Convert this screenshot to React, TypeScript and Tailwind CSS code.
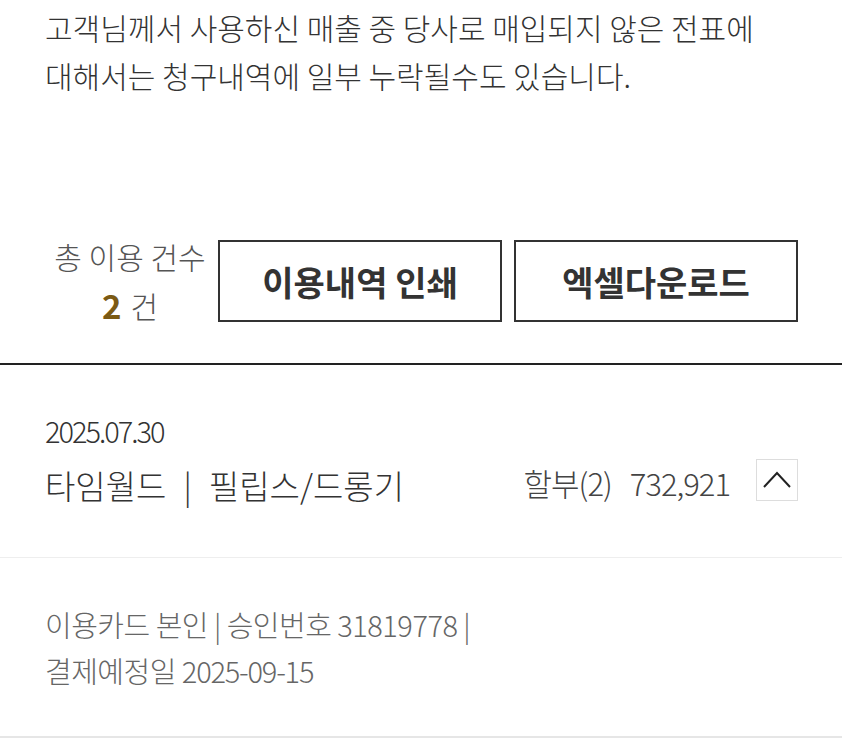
import React from "react";

const FONT = { fontFamily: '"Noto Sans CJK KR", "Noto Sans", sans-serif' };

export default function App() {
  return (
    <div className="w-[842px] bg-white" style={FONT}>
      <p className="px-[45px] pt-[3px] text-[30px] leading-[48px] font-light tracking-[0px] text-[#333]">
        고객님께서 사용하신 매출 중 당사로 매입되지 않은 전표에
        <br />
        대해서는 청구내역에 일부 누락될수도 있습니다.
      </p>

      <div className="mt-[141px] flex px-[44px]">
        <div className="flex w-[162px] flex-col items-center pl-[10px]">
          <div className="h-[32px] text-[30px] leading-[32px] font-light text-[#555]">총 이용 건수</div>
          <div className="mt-[17px] flex h-[32px] items-center gap-[9px] leading-[32px]">
            <span className="text-[33px] font-bold text-[#7b5a14]">2</span>
            <span className="text-[30px] font-light text-[#555]">건</span>
          </div>
        </div>
        <div className="ml-[12px] flex gap-[12px]">
          <button className="flex h-[82px] w-[284px] items-center justify-center border-2 border-[#333] text-[34px] font-bold text-[#333]">
            이용내역 인쇄
          </button>
          <button className="flex h-[82px] w-[284px] items-center justify-center border-2 border-[#333] text-[34px] font-bold text-[#333]">
            엑셀다운로드
          </button>
        </div>
      </div>

      <div className="mt-[41px] h-[2px] bg-[#222]" />

      <div className="pl-[45px] pr-[44px] pt-[49px]">
        <div className="text-[29px] leading-[32px] font-light tracking-[-2px] text-[#333]">2025.07.30</div>
        <div className="mt-[13px] flex h-[42px] items-center justify-between">
          <div className="flex items-center pt-[10px] text-[33px] leading-[42px] font-light text-[#333]">
            <span>타임월드</span>
            <span className="ml-[17px] mr-[17px]">|</span>
            <span>필립스/드롱기</span>
          </div>
          <div className="flex items-center">
            <span className="pt-[6px] text-[31px] leading-[42px] font-light tracking-[-1px] text-[#444]">할부(2)</span>
            <span className="ml-[18px] pt-[6px] text-[31px] leading-[42px] font-light tracking-[-1px] text-[#444]">732,921</span>
            <button className="ml-[26px] flex h-[42px] w-[42px] items-center justify-center border border-[#ddd] bg-white">
              <svg width="30" height="20" viewBox="0 0 30 20" fill="none">
                <path d="M2 17 L15 3 L28 17" stroke="#222" strokeWidth="2" />
              </svg>
            </button>
          </div>
        </div>
      </div>

      <div className="mt-[56px] h-px bg-[#eee]" />

      <div className="px-[45px] pt-[43px] text-[29px] leading-[46px] font-light tracking-[-0.5px] text-[#666]">
        <div>이용카드 본인 | 승인번호 31819778 |</div>
        <div>
          결제예정일 <span className="tracking-[-1.2px]">2025-09-15</span>
        </div>
      </div>

      <div className="mt-[43px] h-[2px] bg-[#e6e6e6]" />
    </div>
  );
}
